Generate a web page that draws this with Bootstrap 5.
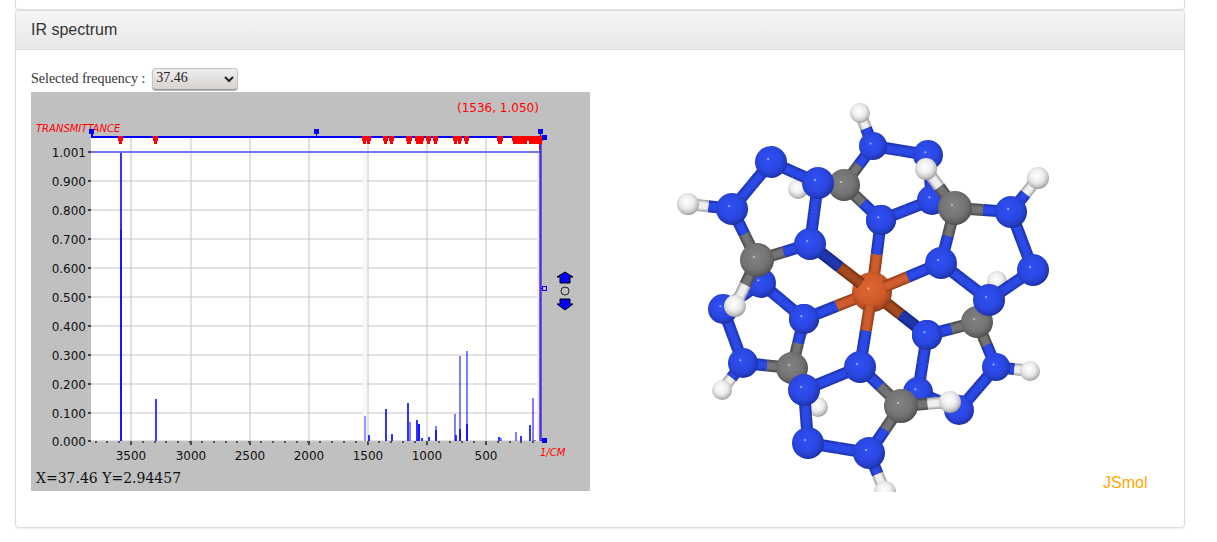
<!DOCTYPE html>
<html lang="en">
<head>
<meta charset="utf-8">
<meta name="viewport" content="width=device-width, initial-scale=1">
<title>IR spectrum</title>
<link rel="stylesheet" href="https://cdn.jsdelivr.net/npm/bootstrap@5.3.0/dist/css/bootstrap.min.css">
<style>
body{font-family:"Liberation Sans",Arial,sans-serif;color:#333;background:#fff}
.page{padding:0 32px 14px 15px}
.panel{border:1px solid #ddd;border-radius:4px;box-shadow:0 1px 2px rgba(0,0,0,.07)}
.panel-prev{height:10px;border-top:0;border-top-left-radius:0;border-top-right-radius:0}
.panel .card-header{padding:10px 15px;line-height:18px;font-size:16px;background:linear-gradient(#f5f5f5,#e8e8e8);border-bottom:1px solid #ddd}
.panel .card-body{padding:18px 15px 35px}
.freq{font-family:"Liberation Serif",serif;font-size:14px;line-height:22px;margin-bottom:2px}
.freq select{width:86px;height:22px;padding:0 4px 2px 3px;font:inherit;line-height:18px;color:#222;border:1px solid #c8c4c2;border-bottom-color:#999;border-radius:4px;background-color:#e3e0de;background-image:url("data:image/svg+xml,%3Csvg xmlns='http://www.w3.org/2000/svg' width='10' height='7'%3E%3Cpath d='M1 1l4 4 4-4' fill='none' stroke='%23222' stroke-width='2'/%3E%3C/svg%3E"),linear-gradient(#f0efee,#d6d2d0);background-repeat:no-repeat;background-position:right 3px center,0 0;appearance:none;box-shadow:0 1px 1px rgba(0,0,0,.3)}
.freq label{margin-right:7px}
.chart-col{padding-right:10px}
svg text{font-family:"DejaVu Sans",sans-serif;font-size:12px;fill:#111}
svg .axis-name{font-size:10px;font-style:oblique;fill:#f00}
svg .pointer{fill:#f00}
svg .readout{font-family:"DejaVu Serif",serif;font-size:14px}
svg .brand{font-family:"Liberation Sans",Arial,sans-serif;font-size:16px;fill:#ffa500}
</style>
</head>
<body>
<main class="container-fluid page">
  <div class="card panel panel-prev"></div>
  <section class="card panel">
    <div class="card-header">IR spectrum</div>
    <div class="card-body">
      <div class="freq d-flex align-items-center">
        <label for="freq">Selected frequency :</label>
        <select id="freq"><option>37.46</option></select>
      </div>
      <div class="row g-0">
        <div class="col-6 chart-col">
          <svg class="d-block w-100" viewBox="31 92 559 399" role="img" aria-label="Infrared spectrum">
            <rect x="31" y="92" width="559" height="399" fill="#c0c0c0"/>
            <rect x="91" y="138" width="450" height="303" fill="#fff"/>
            <g id="grid"></g>
            <rect x="363" y="152" width="4" height="289" fill="#f7f7f7"/>
            <rect x="537" y="152" width="3" height="289" fill="#f8e8ea"/>
            <g id="peaks"></g>
            <path d="M91 152H540" stroke="#7474f4" stroke-width="2"/>
            <text class="axis-name" x="36" y="132">TRANSMITTANCE</text>
            <path d="M92 132V137H545" fill="none" stroke="#00f" stroke-width="2"/>
            <path d="M540.500 137V441" stroke="#4a35d8" stroke-width="2.500"/>
            <path d="M316.500 132V137M540.500 132V137M541 288.500H545M541 440.500H545" stroke="#00f"/>
            <g id="marks" fill="#f00"></g>
            <path d="M89 129h5v5h-5zM314 129h5v5h-5zM538 129h5v5h-5zM542 135h5v5h-5zM542 438h5v5h-5z" fill="#00f"/>
            <rect x="542.500" y="286.500" width="4" height="4" fill="#c0c0c0" stroke="#00f"/>
            <path d="M565 272l8 5h-3v6h-10v-6h-3zM565 310l8-6h-3v-5h-10v5h-3z" fill="#00f" stroke="#000"/>
            <circle cx="565" cy="291" r="4" fill="none" stroke="#222"/>
            <text class="pointer" x="457" y="112">(1536, 1.050)</text>
            <text class="axis-name" x="540" y="456">1/CM</text>
            <text class="readout" x="36" y="483">X=37.46 Y=2.94457</text>
          </svg>
        </div>
        <div class="col-6">
          <svg class="d-block w-100" viewBox="600 92 569 400" role="img" aria-label="Molecule model">
            <defs>
              <radialGradient id="gN" cx=".45" cy=".42" r=".6"><stop offset="0" stop-color="#3150f5"/><stop offset=".6" stop-color="#2a47e2"/><stop offset=".85" stop-color="#233bc0"/><stop offset="1" stop-color="#1a2c92"/></radialGradient>
              <radialGradient id="gC" cx=".45" cy=".42" r=".6"><stop offset="0" stop-color="#828282"/><stop offset=".6" stop-color="#747474"/><stop offset=".85" stop-color="#606060"/><stop offset="1" stop-color="#464646"/></radialGradient>
              <radialGradient id="gH" cx=".45" cy=".4" r=".62"><stop offset="0" stop-color="#fff"/><stop offset=".5" stop-color="#ededed"/><stop offset=".8" stop-color="#c4c4c4"/><stop offset="1" stop-color="#909090"/></radialGradient>
              <radialGradient id="gF" cx=".45" cy=".42" r=".6"><stop offset="0" stop-color="#df6733"/><stop offset=".6" stop-color="#cf5b2b"/><stop offset=".85" stop-color="#ad4b22"/><stop offset="1" stop-color="#7e3517"/></radialGradient>
            </defs>
            <g id="molecule"></g>
            <text class="brand" x="1103" y="488">JSmol</text>
          </svg>
        </div>
      </div>
    </div>
  </section>
</main>
<script>
const put = (id, html) => { document.getElementById(id).innerHTML = html; };

// Spectrum grid, ticks and tick labels
let grid = '';
for (let i = 0; i <= 10; i++) {
  const y = i === 10 ? 441 : 152 + i * 29;
  if (i > 0) grid += `<path d="M91 ${y}H540" stroke="#c8c8c8" stroke-opacity=".55" stroke-width="2"/>`;
  grid += `<path d="M88 ${y}H91" stroke="#444" stroke-width="2"/>`;
  grid += `<text x="86" y="${y + 5}" text-anchor="end">${i ? (1 - i / 10).toFixed(3) : '1.001'}</text>`;
}
[131, 191, 250, 309, 368, 427, 486].forEach((x, i) => {
  grid += `<path d="M${x} 138V441" stroke="#c8c8c8" stroke-opacity=".55" stroke-width="2"/><path d="M${x} 441V445" stroke="#444" stroke-width="2"/><text x="${x}" y="460" text-anchor="middle">${3500 - i * 500}</text>`;
});
for (let i = -3; i < 35; i++) {
  const x = Math.round(131 + i * 11.83);
  grid += `<path d="M${x} 441V443" stroke="#555" stroke-width="2"/>`;
}
put('grid', grid);

// Peaks: x, top, opacity
put('peaks', [[121,152,.8],[121,230,.6],[156,399,.75],[365,416,.4],[369,435,.8],[386,409,.8],[392,434,.8],[408,403,.8],[410,422,.5],[417,420,.8],[419,424,.9],[422,438,.8],[429,437,.8],[436,426,.5],[436,430,.8],[455,414,.5],[456,435,.8],[460,356,.5],[460,429,.8],[467,351,.5],[467,424,.8],[499,437,.8],[501,438,.5],[516,432,.5],[521,436,.8],[530,425,.8],[533,398,.5],[535,440,.5]]
  .map(([x, y, o]) => `<path d="M${x} ${y}V441" stroke="#00f" stroke-opacity="${o}" stroke-width="2"/>`).join(''));

put('marks', [120,155,364,368,385,391,408,409,417,419,421,428,435,455,459,466,499,500,514,516,519,522,525,530,533,536,538,540]
  .map(x => `<path d="M${x - 2} 136h5v5h-1v3h-3v-3h-1z"/>`).join('') + '<path d="M539 142h1v8h-1z"/>');

// Atoms: element, x, y, radius
const A = {
  a:['N',771,162,16],b:['N',732,209,16],c:['C',757,260,17],d:['N',810,244,16],e:['N',818,183,16],f:['H',688,204,11],w:['H',735,306,11],
  g:['H',798,189,10],h:['C',844,185,16],i:['H',860,113,10],j:['N',873,146,14],k:['N',928,155,15],n:['N',932,200,15],o:['N',881,220,15],
  l:['H',926,169,11],m:['C',955,208,17],p:['N',1011,212,16],q:['H',1038,178,11],r:['N',1033,270,16],s:['N',941,263,16],G:['N',989,300,16],
  t:['H',997,281,10],S:['C',977,322,16],I:['N',927,335,15],J:['N',996,367,14],K:['H',1030,371,10],L:['N',918,392,15],M:['N',959,410,15],
  u:['N',761,283,15],v:['N',723,309,15],x:['N',804,319,15],y:['N',743,363,15],z:['C',792,368,16],T:['H',722,390,10],U:['H',818,407,10],
  B:['N',804,390,16],D:['N',808,443,16],E:['N',860,367,16],F:['N',869,453,16],W:['C',901,406,17],O:['H',950,402,11],P:['H',885,492,11],
  Z:['F',872,292,20]
};
const tone = {N:['#1f36b0','#2640d0','#2b49e6'],C:['#4e4e4e','#646464','#747474'],H:['#a8a8a8','#d4d4d4','#efefef'],F:['#98401c','#bb5227','#cf5c2c']};
const dim = {N:['#182981','#1c309c','#2036ae'],F:['#78330f','#92401c','#a54820']};
// Two-tone stick from p to q; cut leaves out that much of its start
function bond(p, q, dark, cut = 0) {
  const [e1, x1, y1] = A[p], [e2, x2, y2] = A[q];
  // the seam lies halfway between the two visible sphere surfaces
  const len = Math.hypot(x2 - x1, y2 - y1), f = .5 + (A[p][3] - A[q][3]) * .35 / len;
  const mx = x1 + (x2 - x1) * f, my = y1 + (y2 - y1) * f, w = 12;
  const sx = x1 + (x2 - x1) * cut / len, sy = y1 + (y2 - y1) * cut / len;
  const set = dark ? dim : tone, half = (e, x, y) => [w, w - 3, w - 6].map((sw, n) =>
    `<path d="M${x} ${y}L${mx} ${my}" stroke="${set[e][n]}" stroke-width="${sw}"/>`).join('');
  return half(e1, sx, sy) + half(e2, x2, y2);
}
function atom(p) {
  const [e, x, y, r] = A[p];
  return `<circle cx="${x}" cy="${y}" r="${r}" fill="url(#g${e})"/><circle cx="${x - r * .18}" cy="${y - r * .18}" r="1" fill="#fff" fill-opacity=".6"/>`;
}
const draw = (bonds, atoms) => bonds.split(' ').map(b => bond(b[0], b[1])).join('') + [...atoms].map(atom).join('');
put('molecule',
  draw('hg hj jk kn no oh ji', 'gnkhijo') +
  draw('zU xu uv vy yz zx yT', 'UzuvTyx') +
  draw('St IS SJ JM ML LI JK', 'tSLMKJI') +
  bond('Z', 'I', true) + atom('I') +
  bond('Z', 'o') + bond('Z', 'x') + atom('o') + atom('x') + atom('Z') +
  bond('Z', 'd', true, 14) + bond('Z', 's', false, 14) + bond('Z', 'E', false, 14) +
  draw('ab bc cd de ea bf cw', 'fcbdaew') +
  draw('mp pr rG Gs sm ml pq', 'smprGlq') +
  draw('EW WF FD DB BE WO FP', 'EBWDPFO'));
</script>
<script src="https://cdn.jsdelivr.net/npm/bootstrap@5.3.0/dist/js/bootstrap.bundle.min.js"></script>
</body>
</html>
